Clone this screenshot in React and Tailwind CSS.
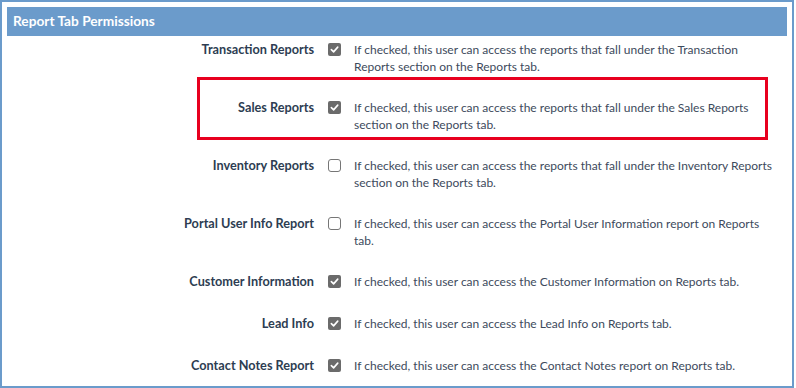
const rows = [
  {
    label: 'Transaction Reports',
    checked: true,
    text: 'If checked, this user can access the reports that fall under the Transaction Reports section on the Reports tab.',
  },
  {
    label: 'Sales Reports',
    checked: true,
    highlight: true,
    text: 'If checked, this user can access the reports that fall under the Sales Reports section on the Reports tab.',
  },
  {
    label: 'Inventory Reports',
    checked: false,
    text: 'If checked, this user can access the reports that fall under the Inventory Reports section on the Reports tab.',
  },
  {
    label: 'Portal User Info Report',
    checked: false,
    text: 'If checked, this user can access the Portal User Information report on Reports tab.',
  },
  {
    label: 'Customer Information',
    checked: true,
    text: 'If checked, this user can access the Customer Information on Reports tab.',
  },
  {
    label: 'Lead Info',
    checked: true,
    text: 'If checked, this user can access the Lead Info on Reports tab.',
  },
  {
    label: 'Contact Notes Report',
    checked: true,
    text: 'If checked, this user can access the Contact Notes report on Reports tab.',
  },
]

function Checkbox({ checked }) {
  if (checked) {
    return (
      <span className="mt-[2px] flex h-[13px] w-[13px] shrink-0 items-center justify-center rounded-[2px] bg-[#6b6b6b]">
        <svg width="9" height="9" viewBox="0 0 10 10" fill="none">
          <path d="M1.5 5.2 L4 7.6 L8.6 2.4" stroke="white" strokeWidth="1.8" strokeLinecap="round" strokeLinejoin="round" />
        </svg>
      </span>
    )
  }
  return <span className="mt-[2px] block h-[13px] w-[13px] shrink-0 rounded-[3px] border border-[#767676] bg-white" />
}

export default function App() {
  return (
    <div className="h-[388px] w-[796px] bg-white" style={{ fontFamily: 'Lato, "Noto Sans", sans-serif' }}>
      <div className="h-[388px] w-[794px] overflow-hidden border-2 border-[#6b9bcb] p-[5px]">
        <div className="flex h-[29px] items-center bg-[#6b9bcb] px-[6px] text-[13.7px] font-bold text-white">
          Report Tab Permissions
        </div>
        {rows.map((r) => (
          <div key={r.label} className="relative flex min-h-[42px] pb-[19px] pt-[5px] text-[12px] leading-[17px]">
            {r.highlight && (
              <div className="pointer-events-none absolute left-[190px] top-[-17px] h-[63px] w-[571px] border-[3px] border-[#e8001f]" />
            )}
            <div className="w-[307px] shrink-0 text-right text-[12.7px] font-bold text-[#2d3d52]">{r.label}</div>
            <div className="ml-[14px] mr-[13px]">
              <Checkbox checked={r.checked} />
            </div>
            <div className="w-[420px] text-[#3d4a5c]">{r.text}</div>
          </div>
        ))}
      </div>
    </div>
  )
}
